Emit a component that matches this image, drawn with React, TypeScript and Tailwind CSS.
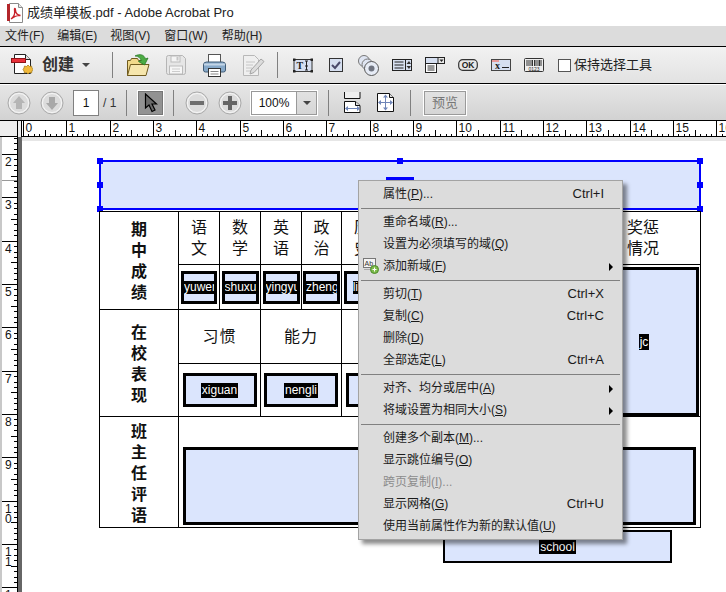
const menus = ['文件(F)', '编辑(E)', '视图(V)', '窗口(W)', '帮助(H)'];

type MenuRow = {
  label?: string;
  hot?: string;
  tail?: string;
  shortcut?: string;
  sub?: boolean;
  off?: boolean;
  icon?: boolean;
  sep?: boolean;
};

const menuRows: MenuRow[] = [
  { label: '属性(', hot: 'P', tail: ')...', shortcut: 'Ctrl+I' },
  { sep: true },
  { label: '重命名域(', hot: 'R', tail: ')...' },
  { label: '设置为必须填写的域(', hot: 'Q', tail: ')' },
  { label: '添加新域(', hot: 'F', tail: ')', sub: true, icon: true },
  { sep: true },
  { label: '剪切(', hot: 'T', tail: ')', shortcut: 'Ctrl+X' },
  { label: '复制(', hot: 'C', tail: ')', shortcut: 'Ctrl+C' },
  { label: '删除(', hot: 'D', tail: ')' },
  { label: '全部选定(', hot: 'L', tail: ')', shortcut: 'Ctrl+A' },
  { sep: true },
  { label: '对齐、均分或居中(', hot: 'A', tail: ')', sub: true },
  { label: '将域设置为相同大小(', hot: 'S', tail: ')', sub: true },
  { sep: true },
  { label: '创建多个副本(', hot: 'M', tail: ')...' },
  { label: '显示跳位编号(', hot: 'O', tail: ')' },
  { label: '跨页复制(', hot: 'I', tail: ')...', off: true },
  { label: '显示网格(', hot: 'G', tail: ')', shortcut: 'Ctrl+U' },
  { label: '使用当前属性作为新的默认值(', hot: 'U', tail: ')' },
];

const inch = 130 / 3;

const Sep = () => <div className="w-px h-[26px] bg-[#808080] shrink-0" />;

const PdfIcon = () => (
  <svg width="16" height="20" viewBox="0 0 16 20" className="shrink-0">
    <path d="M2.500 .5h9l4 4v15h-13z" fill="#fff" stroke="#8a8a8a" />
    <path d="M11.500 .5v4h4" fill="#e8e8e8" stroke="#8a8a8a" />
    <rect x="0" y="1" width="3" height="17" fill="#b3262b" />
    <path d="M4 16c3-2 4-6 3.500-9-.4-2 1-2 1 0 0 3 2 5 5 5.500-3-.3-6 1-9.500 3.500z" fill="none" stroke="#c8232c" strokeWidth="1.300" />
  </svg>
);

const CreateIcon = () => (
  <svg width="22" height="24" viewBox="0 0 22 24" className="shrink-0">
    <path d="M3.500 1.500h11l5 5v14h-16z" fill="#fff" stroke="#222" />
    <path d="M14.500 1.500v5h5" fill="#ddd" stroke="#222" />
    <rect x=".5" y="5.500" width="14" height="4" fill="#e8303a" stroke="#8e1418" />
    <path d="M17 12l1.500 1.500 2-.5.5 2 1 1.500-1 1.500-.5 2-2-.5-1.500 1.500-1.500-1.500-2 .5-.5-2-1-1.500 1-1.500.5-2 2 .5z" fill="#f1b93a" stroke="#9c7413" strokeWidth=".7" />
  </svg>
);

const OpenIcon = () => (
  <svg width="24" height="24" viewBox="0 0 24 24" className="shrink-0">
    <path d="M1.500 22.500v-15h3l1-2h6l1 2h4v4h5l-3 11z" fill="#f1d98a" stroke="#6f5a1e" />
    <path d="M1.500 22.500l3-11h18.500l-3 11z" fill="#f6e6ad" stroke="#6f5a1e" />
    <path d="M9 3c5-2.500 9-1.500 10.500 3l2.500-1-3.500 7-6-3.500 2.800-1c-1-2.500-3-4.500-5.800-4.500z" fill="#4cab43" stroke="#2a7a27" strokeWidth=".8" />
  </svg>
);

const SaveIcon = () => (
  <svg width="20" height="20" viewBox="0 0 20 20" className="shrink-0">
    <path d="M.5 2.500q0-2 2-2h14l3 3v14q0 2-2 2h-15q-2 0-2-2z" fill="#e6e6e6" stroke="#b5b5b5" />
    <rect x="5" y="1" width="9" height="6" fill="#f4f4f4" stroke="#bbb" />
    <rect x="10.500" y="2" width="2" height="3.500" fill="#c6c6c6" />
    <rect x="3.500" y="11" width="13" height="8" fill="#f6f6f6" stroke="#bbb" />
    <path d="M6 14h8M6 16.500h8" stroke="#ccc" />
  </svg>
);

const PrintIcon = () => (
  <svg width="23" height="23" viewBox="0 0 23 23" className="shrink-0">
    <rect x="5.500" y=".5" width="12" height="9" fill="#fff" stroke="#555" />
    <path d="M.5 11q0-3 3-3h16q3 0 3 3v5q0 2-2 2h-18q-2 0-2-2z" fill="#87a9c9" stroke="#3f5a75" />
    <path d="M1 9.500h21v2h-21z" fill="#c3d5e6" />
    <rect x="5.500" y="14.500" width="12" height="8" fill="#fff" stroke="#333" />
    <path d="M7.500 17.500h8M7.500 20h8" stroke="#888" />
  </svg>
);

const SignIcon = () => (
  <svg width="22" height="21" viewBox="0 0 22 21" className="shrink-0">
    <path d="M.5 .5h11l4 4v16h-15z" fill="#efefef" stroke="#b8b8b8" />
    <path d="M3 7h9M3 10h7M3 13h6M3 16h5" stroke="#c6c6c6" />
    <path d="M8 15l10-11 3 2.500-10 11-4 1.500z" fill="#dcdcdc" stroke="#a5a5a5" />
  </svg>
);

const TextFieldIcon = () => (
  <svg width="20" height="15" viewBox="0 0 20 15" className="shrink-0">
    <rect x="1" y="1.500" width="18" height="12" fill="#d6dff0" stroke="#333" />
    <text x="3.500" y="11" fontSize="10" fontWeight="700" fill="#222" fontFamily="Liberation Serif">T</text>
    <path d="M12 3h3M13.500 3v9M12 12h3M12 8h3" stroke="#222" />
    <rect x="0" y=".5" width="2.500" height="2.500" fill="#222" />
    <rect x="17.500" y=".5" width="2.500" height="2.500" fill="#222" />
    <rect x="0" y="12" width="2.500" height="2.500" fill="#222" />
    <rect x="17.500" y="12" width="2.500" height="2.500" fill="#222" />
  </svg>
);

const CheckIcon = () => (
  <svg width="14" height="14" viewBox="0 0 14 14" className="shrink-0">
    <rect x=".5" y=".5" width="13" height="13" fill="#d6dff0" stroke="#333" />
    <path d="M3 7l3 3 5-6" fill="none" stroke="#4a4a6a" strokeWidth="2" />
  </svg>
);

const RadioIcon = () => (
  <svg width="21" height="21" viewBox="0 0 21 21" className="shrink-0">
    <circle cx="6" cy="6" r="5.500" fill="#dfe5f2" stroke="#777" />
    <circle cx="9.500" cy="9.500" r="5.500" fill="#dfe5f2" stroke="#777" />
    <circle cx="13.500" cy="13.500" r="7" fill="#e6ebf5" stroke="#555" />
    <circle cx="13.500" cy="13.500" r="3" fill="#6f7480" />
  </svg>
);

const ListIcon = () => (
  <svg width="20" height="12" viewBox="0 0 20 12" className="shrink-0">
    <rect x=".5" y=".5" width="19" height="11" fill="#d6dff0" stroke="#222" />
    <path d="M2.500 3h9M2.500 6h9M2.500 9h9" stroke="#222" />
    <path d="M13.500 .5v11" stroke="#222" />
    <path d="M14.500 5l2.500-3 2 3zM14.500 7l2.500 3 2-3z" fill="#333" />
  </svg>
);

const ComboIcon = () => (
  <svg width="20" height="16" viewBox="0 0 20 16" className="shrink-0">
    <rect x=".5" y=".5" width="19" height="6" fill="#d6dff0" stroke="#222" />
    <rect x="13" y=".5" width="6.500" height="6" fill="#e8e8e8" stroke="#222" />
    <path d="M14.500 2.500h4l-2 2.500z" fill="#222" />
    <rect x=".5" y="6.500" width="11" height="9" fill="#fff" stroke="#222" />
    <path d="M2.500 9h7M2.500 11h7M2.500 13h7" stroke="#333" />
  </svg>
);

const OkIcon = () => (
  <svg width="20" height="12" viewBox="0 0 20 12" className="shrink-0">
    <rect x=".7" y=".7" width="18.600" height="10.600" rx="4" fill="#e8e8e8" stroke="#333" strokeWidth="1.200" />
    <text x="10" y="9" textAnchor="middle" fontSize="8.500" fontWeight="700" fill="#222" fontFamily="Liberation Sans">OK</text>
  </svg>
);

const XFieldIcon = () => (
  <svg width="20" height="12" viewBox="0 0 20 12" className="shrink-0">
    <rect x=".5" y=".5" width="19" height="11" fill="#d6dff0" stroke="#444" />
    <rect x="1" y="1" width="7" height="2" fill="#e79a9a" />
    <text x="4" y="10" fontSize="10" fontWeight="700" fill="#222" fontFamily="Liberation Serif">x</text>
    <path d="M11 8.500h7" stroke="#222" />
  </svg>
);

const BarcodeIcon = () => (
  <svg width="20" height="14" viewBox="0 0 20 14" className="shrink-0">
    <rect x=".5" y=".5" width="19" height="13" rx="1" fill="#eee" stroke="#333" />
    <path d="M3 2v6M5 2v6M7 2v6M8.500 2v6M10.500 2v6M12 2v6M14 2v6M15.500 2v6M17 2v6" stroke="#333" />
    <text x="10" y="12.500" textAnchor="middle" fontSize="5" fill="#222" fontFamily="Liberation Sans">0123</text>
  </svg>
);

const Round = ({ kind }: { kind: 'up' | 'down' | 'minus' | 'plus' }) => (
  <svg width="24" height="24" viewBox="0 0 24 24" className="shrink-0">
    <circle cx="12" cy="12" r="11" fill="#e6e6e6" stroke="#a9a9a9" />
    <circle cx="12" cy="12" r="9.500" fill="#dcdcdc" stroke="#f6f6f6" />
    {kind === 'up' && <path d="M12 5l6 7h-3v6h-6v-6h-3z" fill="#b5b5b5" />}
    {kind === 'down' && <path d="M12 19l6-7h-3v-6h-6v6h-3z" fill="#a8a8a8" />}
    {kind === 'minus' && <rect x="5" y="10" width="14" height="4" fill="#6e6e6e" />}
    {kind === 'plus' && <path d="M10 5h4v5h5v4h-5v5h-4v-5h-5v-4h5z" fill="#666" />}
  </svg>
);

const Cursor = () => (
  <svg width="14" height="20" viewBox="0 0 14 20">
    <path d="M1.500 1v14l3.500-3 3 6.500 3-1.500-3-6h4.500z" fill="#6a6a6a" stroke="#000" strokeWidth="1.200" />
  </svg>
);

const FitWidth = () => (
  <svg width="17" height="21" viewBox="0 0 17 21" className="shrink-0">
    <path d="M.5 0v6.500h15.500v-6.500" fill="#eee" stroke="#111" />
    <path d="M.5 9.500h11l4.500 4v7h-15.500z" fill="#fff" stroke="#111" />
    <path d="M11.500 9.500v4h4.500" fill="#ddd" stroke="#111" />
    <path d="M2 16.500h13" stroke="#6f85b8" />
    <path d="M1 16.500l3-2.500v5zM16 16.500l-3-2.500v5z" fill="#6f85b8" />
  </svg>
);

const FitPage = () => (
  <svg width="17" height="19" viewBox="0 0 17 19" className="shrink-0">
    <path d="M.5 .5h12l4 4v14h-16z" fill="#fff" stroke="#111" />
    <path d="M12.500 .5v4h4" fill="#ddd" stroke="#111" />
    <path d="M8.500 3v13M2.500 9.500h12" stroke="#6f85b8" />
    <path d="M8.500 1.500l2.500 3h-5zM8.500 17.500l2.500-3h-5zM1 9.500l3-2.500v5zM16 9.500l-3-2.500v5z" fill="#6f85b8" />
  </svg>
);

const AddFieldIcon = () => (
  <svg width="16" height="16" viewBox="0 0 16 16">
    <rect x=".5" y=".5" width="12" height="9" fill="#f4f4f4" stroke="#777" />
    <text x="1.500" y="7.500" fontSize="7" fill="#333" fontFamily="Liberation Sans">Ab</text>
    <path d="M1 11.500h7" stroke="#aaa" />
    <circle cx="11.500" cy="11.500" r="4" fill="#7dbb4a" stroke="#4c8a2c" />
    <path d="M9.500 11.500h4M11.500 9.500v4" stroke="#fff" />
  </svg>
);

const TopRuler = () => (
  <svg width="704" height="16" viewBox="0 0 704 16" className="block">
    <rect width="704" height="16" fill="#fff" />
    <path d="M0 15.500h704" stroke="#000" />
    {Array.from({ length: 17 }).map((_, n) => {
      const x = Math.round(1 + n * inch) + 0.5;
      return (
        <g key={n}>
          <path d={`M${x} 0v16`} stroke="#000" />
          <text x={x + 2} y="11" fontSize="12" fill="#111" fontFamily="Liberation Sans">{n}</text>
          {[1, 2, 3, 4, 5, 6, 7].map((t) => (
            <path
              key={t}
              d={`M${Math.round(1 + n * inch + (t * inch) / 8) + 0.5} ${t === 4 ? 9 : 13}V16`}
              stroke="#000"
            />
          ))}
        </g>
      );
    })}
  </svg>
);

const SideRuler = () => (
  <svg width="18" height="455" viewBox="0 0 18 455" className="block">
    <rect width="18" height="455" fill="#fff" />
    <rect width="2" height="455" fill="#c8c8c8" />
    <path d="M17.500 0v455" stroke="#000" />
    <path d="M2 43.500h15" stroke="#999" />
    {Array.from({ length: 13 }).map((_, i) => {
      const n = i + 1;
      const y = Math.round(17 + (n - 2) * inch) + 0.5;
      const digits = String(n).split('');
      return (
        <g key={n}>
          <path d={`M2 ${y}h16`} stroke="#000" />
          {digits.map((d, k) => (
            <text key={k} x="5" y={y + 11 + k * 10} fontSize="12" fill="#111" fontFamily="Liberation Sans">{d}</text>
          ))}
          {[1, 2, 3, 4, 5, 6, 7].map((t) => (
            <path
              key={t}
              d={`M${t === 4 ? 11 : 14} ${Math.round(17 + (n - 2) * inch + (t * inch) / 8) + 0.5}H18`}
              stroke="#000"
            />
          ))}
        </g>
      );
    })}
  </svg>
);

const SmallField = ({ name, w }: { name: string; w: string }) => (
  <div className={`${w} h-[33px] border-[3px] border-black bg-[#dbe5fd] flex items-center overflow-hidden`}>
    <div className="mx-auto w-fit max-w-full bg-black text-white text-[12px] leading-[13px] whitespace-nowrap overflow-hidden">
      {name}
    </div>
  </div>
);

const WideField = ({ name }: { name?: string }) => (
  <div className="w-[74px] h-[34px] border-[3px] border-black bg-[#dbe5fd] flex items-center justify-center">
    {name && <span className="bg-black text-white text-[12px] leading-[15px] px-px">{name}</span>}
  </div>
);

const Head = ({ a, b }: { a: string; b: string }) => (
  <div className="border-l border-t border-black flex flex-col items-center justify-center text-[16px] leading-[21px] text-[#111]">
    <span>{a}</span>
    <span>{b}</span>
  </div>
);

const Side = ({ text, cls }: { text: string; cls: string }) => (
  <div className={`${cls} border-l border-t border-black flex flex-col items-center justify-center text-[16px] leading-[21px] font-bold text-[#111]`}>
    {text.split('').map((c, i) => (
      <span key={i}>{c}</span>
    ))}
  </div>
);

const Table = () => (
  <div className="absolute left-[77px] top-[74px] w-[602px] border-r border-b border-black grid grid-cols-[79px_41px_41px_41px_40px_41px_203px_115px] grid-rows-[53px_45px_54px_53px_111px]">
    <Side text="期中成绩" cls="row-span-2" />
    <Head a="语" b="文" />
    <Head a="数" b="学" />
    <Head a="英" b="语" />
    <Head a="政" b="治" />
    <Head a="历" b="史" />
    <div className="border-l border-t border-black" />
    <Head a="奖惩" b="情况" />

    <div className="border-l border-t border-black flex items-center justify-center"><SmallField name="yuwen" w="w-[36px]" /></div>
    <div className="border-l border-t border-black flex items-center justify-center"><SmallField name="shuxue" w="w-[37px]" /></div>
    <div className="border-l border-t border-black flex items-center justify-center"><SmallField name="yingyu" w="w-[37px]" /></div>
    <div className="border-l border-t border-black flex items-center justify-center"><SmallField name="zhengzhi" w="w-[37px]" /></div>
    <div className="border-l border-t border-black flex items-center pl-[2px]"><SmallField name="lishi" w="w-[38px]" /></div>
    <div className="border-l border-t border-black" />
    <div className="row-span-3 border-t border-black flex items-end justify-end pr-[1px]">
      <div className="w-[110px] h-[149px] border-[3px] border-black bg-[#dbe5fd] flex items-center justify-center">
        <span className="bg-black text-white text-[12px] leading-[16px] px-px">jc</span>
      </div>
    </div>

    <Side text="在校表现" cls="row-span-2 pt-[2px]" />
    <div className="col-span-2 border-l border-t border-black flex items-center justify-center text-[16px] tracking-[1px] text-[#111]">习惯</div>
    <div className="col-span-2 border-l border-t border-black flex items-center justify-center text-[16px] tracking-[1px] text-[#111]">能力</div>
    <div className="col-span-2 border-l border-t border-black" />

    <div className="col-span-2 border-l border-t border-black flex items-center justify-center"><WideField name="xiguan" /></div>
    <div className="col-span-2 border-l border-t border-black flex items-center justify-center"><WideField name="nengli" /></div>
    <div className="col-span-2 border-l border-t border-black flex items-center pl-[4px]"><WideField /></div>

    <Side text="班主任评语" cls="pt-[2px]" />
    <div className="col-span-7 border-l border-t border-black flex items-end justify-center pb-[2px]">
      <div className="w-[513px] h-[78px] border-[3px] border-black bg-[#dbe5fd]" />
    </div>
  </div>
);

const SelectedField = () => (
  <div className="absolute left-[77px] top-[23px] w-[602px] h-[50px] border-2 border-[#0000ff] bg-[#dbe5fd]">
    <div className="absolute left-[285px] top-[15px] w-[28px] h-[3px] bg-[#0000ff]" />
    <div className="absolute left-[-4px] top-[-4px] size-[6px] bg-[#0000ff]" />
    <div className="absolute left-[296px] top-[-4px] size-[6px] bg-[#0000ff]" />
    <div className="absolute right-[-4px] top-[-4px] size-[6px] bg-[#0000ff]" />
    <div className="absolute left-[-4px] top-[20px] size-[6px] bg-[#0000ff]" />
    <div className="absolute right-[-4px] top-[20px] size-[6px] bg-[#0000ff]" />
    <div className="absolute left-[-4px] bottom-[-4px] size-[6px] bg-[#0000ff]" />
    <div className="absolute right-[-4px] bottom-[-4px] size-[6px] bg-[#0000ff]" />
  </div>
);

const ContextMenu = () => (
  <div className="absolute left-[358px] top-[180px] w-[265px] h-[360px] pt-[2px] bg-[#dcdcdc] border border-[#a3a3a3] shadow-[4px_4px_4px_rgba(0,0,0,0.45)] text-[12px]">
    {menuRows.map((row, i) =>
      row.sep ? (
        <div key={i} className="h-[6px] flex items-center px-[2px]">
          <div className="w-full h-px bg-[#808080]" />
        </div>
      ) : (
        <div
          key={i}
          className={`h-[22px] flex items-center pl-[24px] pr-[18px] relative ${row.off ? 'text-[#8c8c8c]' : 'text-[#1a1a1a]'}`}
        >
          {row.icon && (
            <span className="absolute left-[4px] top-[3px]">
              <AddFieldIcon />
            </span>
          )}
          <span>
            {row.label}
            <span className="underline">{row.hot}</span>
            {row.tail}
          </span>
          {row.shortcut && <span className="ml-auto text-[13px]">{row.shortcut}</span>}
          {row.sub && (
            <span className="absolute right-[9px] top-[8px] w-0 h-0 border-y-[4px] border-y-transparent border-l-[4px] border-l-black" />
          )}
        </div>
      ),
    )}
  </div>
);

export default function App() {
  return (
    <div className="relative w-[726px] h-[592px] overflow-hidden bg-white font-['Liberation_Sans','Noto_Sans_CJK_SC',sans-serif]">
      <div className="h-[26px] bg-white flex items-center pl-[7px] text-[13px] text-[#222]">
        <PdfIcon />
        <span className="ml-[4px]">成绩单模板.pdf - Adobe Acrobat Pro</span>
      </div>

      <div className="h-[21px] bg-[#dcdcdc] border-b border-black flex items-center text-[12px] text-[#222]">
        <span className="ml-[5px]">{menus[0]}</span>
        <span className="ml-[13px]">{menus[1]}</span>
        <span className="ml-[13px]">{menus[2]}</span>
        <span className="ml-[14px]">{menus[3]}</span>
        <span className="ml-[14px]">{menus[4]}</span>
      </div>

      <div className="h-[37px] border-b border-black bg-gradient-to-b from-[#f2f2f2] to-[#e2e2e2] flex items-center pl-[11px]">
        <CreateIcon />
        <span className="ml-[9px] text-[16px] font-bold text-[#333]">创建</span>
        <span className="ml-[8px] w-0 h-0 border-x-[4px] border-x-transparent border-t-[4px] border-t-[#444]" />
        <div className="ml-[22px]"><Sep /></div>
        <div className="ml-[13px]"><OpenIcon /></div>
        <div className="ml-[16px]"><SaveIcon /></div>
        <div className="ml-[17px]"><PrintIcon /></div>
        <div className="ml-[17px]"><SignIcon /></div>
        <div className="ml-[12px]"><Sep /></div>
        <div className="ml-[15px]"><TextFieldIcon /></div>
        <div className="ml-[16px]"><CheckIcon /></div>
        <div className="ml-[15px]"><RadioIcon /></div>
        <div className="ml-[13px]"><ListIcon /></div>
        <div className="ml-[13px]"><ComboIcon /></div>
        <div className="ml-[13px]"><OkIcon /></div>
        <div className="ml-[13px]"><XFieldIcon /></div>
        <div className="ml-[13px]"><BarcodeIcon /></div>
        <div className="ml-[14px] size-[13px] bg-white border border-[#555]" />
        <span className="ml-[3px] text-[13px] text-[#222]">保持选择工具</span>
      </div>

      <div className="h-[37px] border-t border-white border-b-black border-b bg-gradient-to-b from-[#e6e6e6] to-[#d2d2d2] flex items-center pl-[7px]">
        <Round kind="up" />
        <div className="ml-[9px]"><Round kind="down" /></div>
        <div className="ml-[9px] w-[26px] h-[26px] bg-white border border-[#808080] flex items-center justify-center text-[12px] text-[#111]">1</div>
        <span className="ml-[4px] w-[13px] text-[12px] text-[#333] whitespace-nowrap">/ 1</span>
        <div className="ml-[10px]"><Sep /></div>
        <div className="ml-[10px] w-[27px] h-[26px] bg-[#929292] border border-white outline outline-[#777] -outline-offset-2 flex items-center justify-center">
          <Cursor />
        </div>
        <div className="ml-[9px]"><Sep /></div>
        <div className="ml-[11px]"><Round kind="minus" /></div>
        <div className="ml-[9px]"><Round kind="plus" /></div>
        <div className="ml-[8px] w-[68px] h-[26px] border border-white flex items-stretch">
          <div className="w-[45px] bg-white border border-[#999] border-r-0 flex items-center justify-center text-[12px] text-[#111]">100%</div>
          <div className="flex-1 border border-[#999] flex items-center justify-center">
            <span className="w-0 h-0 border-x-[4px] border-x-transparent border-t-[4px] border-t-[#444]" />
          </div>
        </div>
        <div className="ml-[10px]"><Sep /></div>
        <div className="ml-[15px]"><FitWidth /></div>
        <div className="ml-[16px]"><FitPage /></div>
        <div className="ml-[16px]"><Sep /></div>
        <div className="ml-[12px] w-[44px] h-[26px] border border-white outline outline-[#9a9a9a] -outline-offset-2 flex items-center justify-center text-[13px] text-[#777]">预览</div>
      </div>

      <div className="flex h-[16px]">
        <div className="w-[22px] bg-[#eeeeee] border-r border-black relative">
          <div className="absolute left-0 right-[4px] bottom-0 h-px bg-black" />
          <div className="absolute left-[17px] top-0 bottom-0 w-px bg-black" />
        </div>
        <TopRuler />
      </div>

      <div className="flex h-[455px]">
        <SideRuler />
        <div className="w-[4px] bg-[#666666]" />
        <div className="relative flex-1 bg-white">
          <div className="h-[4px] bg-[#e6e6e6]" />
          <SelectedField />
          <Table />
          <div className="absolute left-[421px] top-[393px] w-[229px] h-[33px] border-2 border-black bg-[#dbe5fd] flex items-center justify-center">
            <span className="bg-black text-white text-[12px] leading-[14px] px-px">school</span>
          </div>
        </div>
      </div>

      <ContextMenu />
    </div>
  );
}
